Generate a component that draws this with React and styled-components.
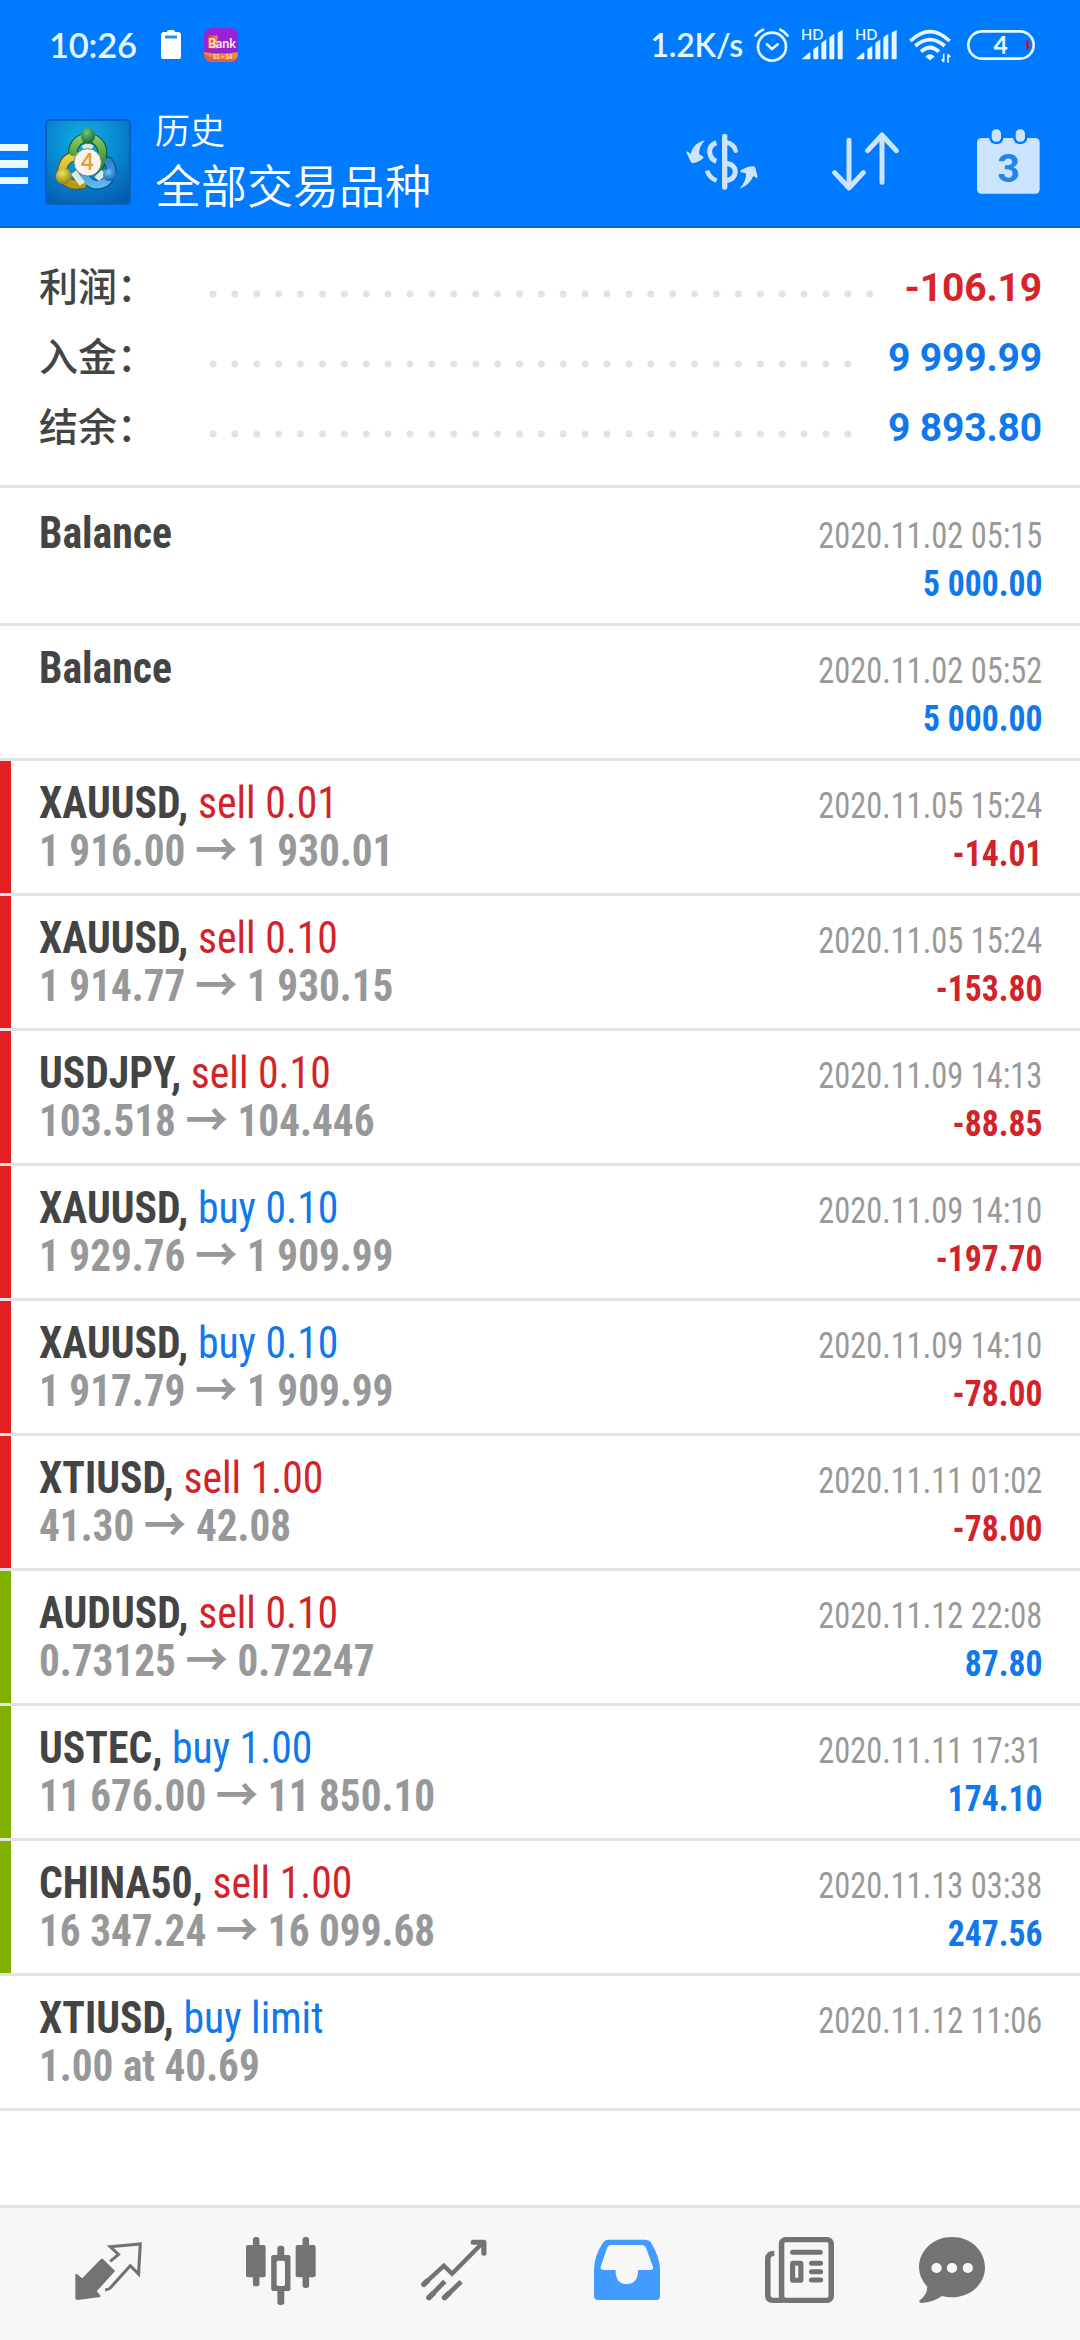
import React from 'react'
import styled, { createGlobalStyle } from 'styled-components'

const GlobalStyle = createGlobalStyle`
  *{
    box-sizing:border-box;
  }
  body{
    margin:0;
    background-color:#fff;
    font-family:Roboto, "Noto Sans CJK SC", sans-serif;
  }
  svg{
    display:block;
    flex-shrink:0;
  }
`
const Pantalla = styled.div`
  display:flex;
  flex-direction:column;
  width:1080px;
  height:2340px;
  background-color:#fff;
  overflow:hidden;
`
const Header = styled.header`
  height:228px;
  background-color:#007aff;
  border-bottom:2px solid #0a66d2;
  color:#fff;
`
const StatusBar = styled.div`
  display:flex;
  align-items:center;
  height:90px;
  padding:0 45px 0 49px;
  color:#e6f6ff;
  font-family:Lato, sans-serif;
`
const Clock = styled.span`
  width:112px;
  font-size:34.5px;
  font-weight:600;
  line-height:40px;
  letter-spacing:-0.2px;
`
const Speed = styled.span`
  margin-left:auto;
  margin-right:11px;
  font-size:32px;
  font-weight:600;
  line-height:40px;
  letter-spacing:-0.2px;
`
const Signals = styled.div`
  display:flex;
  align-items:center;
  gap:12px;
  margin-right:15px;
  svg{
    overflow:visible;
  }
`
const Notices = styled.div`
  display:flex;
  align-items:center;
  gap:23px;
`
const Toolbar = styled.div`
  display:flex;
  align-items:center;
  height:136px;
  padding:7px 40px 0 0;
`
const MenuBars = styled.div`
  display:flex;
  flex-direction:column;
  gap:9px;
  width:28px;
  margin:5px 17px 0 0;
  span{
    height:7.5px;
    background-color:#e9f7ff;
  }
`
const Titles = styled.div`
  display:flex;
  flex-direction:column;
  margin:-7px auto 0 24px;
  font-family:"Noto Sans CJK SC", sans-serif;
  font-weight:350;
  small{
    font-size:35px;
    line-height:50px;
  }
  strong{
    font-size:46px;
    font-weight:350;
    line-height:58px;
  }
`
const Actions = styled.div`
  display:flex;
  align-items:center;
  gap:74px;
  color:#cce4ff;
  svg:last-child{
    margin-left:4px;
  }
`
const Summary = styled.section`
  height:257px;
  padding:24px 38px 0 39px;
`
const SummaryRow = styled.div`
  display:flex;
  align-items:center;
  height:70px;
  color:#444;
`
const SummaryLabel = styled.span`
  width:163px;
  margin-top:-6px;
  font-family:"Noto Sans CJK SC", sans-serif;
  font-size:39px;
  font-weight:500;
  line-height:60px;
`
const Dots = styled.span`
  flex:1;
  height:8px;
  margin:13px 25px 0 0;
  background-image:radial-gradient(circle at 11px 4px, #e2e2e2 3px, transparent 4px);
  background-size:21.9px 8px;
  background-repeat:repeat-x;
`
const SummaryValue = styled.span`
  padding-top:1px;
  font-size:39px;
  font-weight:700;
  line-height:60px;
  letter-spacing:-0.15px;
  color:${p => p.$loss ? '#d8232a' : '#0f78ec'};
`
const List = styled.div`
  flex:1;
  border-top:3px solid #e3e3e3;
  padding-top:3px;
`
const Row = styled.div`
  display:flex;
  justify-content:space-between;
  height:135px;
  padding:18px 38px 0 28px;
  border-bottom:3px solid #e3e3e3;
  background:linear-gradient(${p => p.$bar || '#fff'}, ${p => p.$bar || '#fff'}) 0 0 / 11px 100% no-repeat;
  font-stretch:75%;
`
const Left = styled.div`
  padding-left:11px;
  font-size:44.5px;
  line-height:48px;
  white-space:pre;
`
const Right = styled.div`
  padding-top:3px;
  font-size:36.5px;
  line-height:48px;
  text-align:right;
`
const Symbol = styled.div`
  color:#444;
  font-weight:700;
  transform:scaleX(0.937);
  transform-origin:left;
`
const Side = styled.span`
  font-weight:400;
  color:${p => p.$sell ? '#d3232a' : '#0f78ec'};
`
const Prices = styled.div`
  color:#97989a;
  font-weight:700;
  transform:scaleX(0.926);
  transform-origin:left;
`
const Arrow = styled.span`
  font-family:"Noto Sans CJK SC", sans-serif;
  font-size:46px;
  font-weight:700;
  line-height:0;
`
const Time = styled.div`
  color:#999;
  transform:scaleX(0.888);
  transform-origin:right;
`
const Profit = styled.div`
  font-weight:700;
  color:${p => p.$loss ? '#d3232a' : '#0f78ec'};
  transform:scaleX(0.92);
  transform-origin:right;
`
const Nav = styled.nav`
  display:flex;
  height:135px;
  padding:0 21px 6px 22px;
  border-top:3px solid #e3e3e3;
  background-color:#f7f7f7;
`
const NavItem = styled.div`
  display:flex;
  align-items:center;
  justify-content:center;
  width:172.8px;
  padding-right:${p => p.$shift || 0}px;
  color:${p => p.$active ? '#429cff' : '#737373'};
`

const resumen = [
  { label: '利润：', value: '-106.19', loss: true },
  { label: '入金：', value: '9 999.99' },
  { label: '结余：', value: '9 893.80' },
]

const operaciones = [
  { symbol: 'Balance', time: '2020.11.02 05:15', profit: '5 000.00' },
  { symbol: 'Balance', time: '2020.11.02 05:52', profit: '5 000.00' },
  { symbol: 'XAUUSD', side: 'sell 0.01', from: '1 916.00', to: '1 930.01', time: '2020.11.05 15:24', profit: '-14.01' },
  { symbol: 'XAUUSD', side: 'sell 0.10', from: '1 914.77', to: '1 930.15', time: '2020.11.05 15:24', profit: '-153.80' },
  { symbol: 'USDJPY', side: 'sell 0.10', from: '103.518', to: '104.446', time: '2020.11.09 14:13', profit: '-88.85' },
  { symbol: 'XAUUSD', side: 'buy 0.10', from: '1 929.76', to: '1 909.99', time: '2020.11.09 14:10', profit: '-197.70' },
  { symbol: 'XAUUSD', side: 'buy 0.10', from: '1 917.79', to: '1 909.99', time: '2020.11.09 14:10', profit: '-78.00' },
  { symbol: 'XTIUSD', side: 'sell 1.00', from: '41.30', to: '42.08', time: '2020.11.11 01:02', profit: '-78.00' },
  { symbol: 'AUDUSD', side: 'sell 0.10', from: '0.73125', to: '0.72247', time: '2020.11.12 22:08', profit: '87.80' },
  { symbol: 'USTEC', side: 'buy 1.00', from: '11 676.00', to: '11 850.10', time: '2020.11.11 17:31', profit: '174.10' },
  { symbol: 'CHINA50', side: 'sell 1.00', from: '16 347.24', to: '16 099.68', time: '2020.11.13 03:38', profit: '247.56' },
  { symbol: 'XTIUSD', side: 'buy limit', note: '1.00 at 40.69', time: '2020.11.12 11:06' },
]

const BatteryIcon = () => (
  <svg width="20" height="30" viewBox="0 0 20 30">
    <path d="M6 2q0-2 2-2h4q2 0 2 2h3q3 0 3 3v22q0 2-2 2H2q-2 0-2-2V5q0-3 3-3z" fill="#fff" />
    <rect x="4" y="5.500" width="12" height="3" fill="#2d8cf5" />
  </svg>
)

const BankIcon = () => (
  <svg width="34" height="34" viewBox="0 0 34 34">
    <defs>
      <clipPath id="bank"><rect width="34" height="34" rx="8" /></clipPath>
      <linearGradient id="bankB" x1="0" x2="1"><stop offset="0" stopColor="#f0271c" /><stop offset="1" stopColor="#f58a5c" /></linearGradient>
    </defs>
    <g clipPath="url(#bank)">
      <rect width="34" height="34" fill="#9a22d6" />
      <path d="M0 24q17 3 34 0v10H0z" fill="#f08a35" />
      <path d="M0 25q8 8 34 6v3H0z" fill="#e55b4a" />
    </g>
    <rect x="3.500" y="7.500" width="10" height="13" fill="url(#bankB)" />
    <text x="4" y="19.500" fontSize="13" fontWeight="700" fill="#ffe9e0" fontFamily="Lato, sans-serif" textLength="28" lengthAdjust="spacingAndGlyphs">Bank</text>
    <text x="9" y="31" fontSize="6" fill="#fff" fontFamily="Noto Sans CJK SC, sans-serif">11·14</text>
  </svg>
)

const AlarmIcon = () => (
  <svg width="35" height="35" viewBox="0 0 105 105" fill="none" stroke="currentColor" strokeWidth="8" strokeLinecap="round">
    <circle cx="54" cy="56" r="42" />
    <path d="M39 49l15 14 17-14" />
    <path d="M5 22Q14 10 27 5M79 5q14 6 22 18" />
  </svg>
)

const SignalIcon = () => (
  <svg width="42" height="35" viewBox="0 0 126 105" fill="currentColor">
    <text x="0" y="36" fontSize="46" fontWeight="600" fontFamily="Lato, sans-serif" textLength="67" lengthAdjust="spacingAndGlyphs">HD</text>
    <path d="M4 94q0-4 4-6l16-14q4-2 4 2v15q0 3-3 3z" />
    <path d="M37 64l15-11v38q0 3-3 3h-9q-3 0-3-3z" />
    <path d="M61 45l15-11v57q0 3-3 3h-9q-3 0-3-3z" />
    <path d="M85 28l15-11v74q0 3-3 3h-9q-3 0-3-3z" />
    <path d="M110 14l15-9v86q0 3-3 3h-9q-3 0-3-3z" />
  </svg>
)

const WifiIcon = () => (
  <svg width="43" height="35" viewBox="0 0 129 105" fill="none" stroke="currentColor" strokeWidth="11">
    <path d="M4 39Q63-17 122 39" />
    <path d="M19 54q44-38 88 0" />
    <path d="M36 71q27-25 54 0" />
    <path d="M49 86q14-14 28 0L63 97z" fill="currentColor" stroke="none" />
    <path d="M104 77v25M98 94l6 8M117 104V79M117 79l7 9" strokeWidth="5" />
  </svg>
)

const ChargeIcon = () => (
  <svg width="68" height="30" viewBox="0 0 204 90">
    <rect x="4" y="4" width="196" height="82" rx="41" fill="none" stroke="currentColor" strokeWidth="8" />
    <path d="M178 29q8 0 8 16t-8 16z" fill="#b8104a" />
    <text x="101" y="71" fontSize="74" fontWeight="700" textAnchor="middle" fill="currentColor" fontFamily="Lato, sans-serif">4</text>
  </svg>
)

const AppLogo = () => (
  <svg width="86" height="86" viewBox="0 0 258 258">
    <defs>
      <radialGradient id="fondo" cx=".45" cy=".25" r=".85">
        <stop offset="0" stopColor="#10b2e4" />
        <stop offset=".5" stopColor="#0887cf" />
        <stop offset="1" stopColor="#055aae" />
      </radialGradient>
      <linearGradient id="verde" x2="0" y2="1"><stop offset="0" stopColor="#8cc860" /><stop offset="1" stopColor="#1f8230" /></linearGradient>
      <linearGradient id="oro" x2="0" y2="1"><stop offset="0" stopColor="#e8d648" /><stop offset="1" stopColor="#b39a18" /></linearGradient>
      <linearGradient id="azul" x2="0" y2="1"><stop offset="0" stopColor="#2f86cc" /><stop offset="1" stopColor="#5ab8f0" /></linearGradient>
      <radialGradient id="bolaV" cx=".4" cy=".3" r=".7"><stop offset="0" stopColor="#6fc878" /><stop offset="1" stopColor="#176c36" /></radialGradient>
      <radialGradient id="bolaO" cx=".4" cy=".3" r=".7"><stop offset="0" stopColor="#f2e45a" /><stop offset="1" stopColor="#948010" /></radialGradient>
      <radialGradient id="bolaA" cx=".4" cy=".3" r=".7"><stop offset="0" stopColor="#6cc6f5" /><stop offset="1" stopColor="#1562b4" /></radialGradient>
    </defs>
    <rect x="3" y="3" width="252" height="252" rx="10" fill="url(#fondo)" stroke="#0a5fc0" strokeWidth="6" />
    <g fill="none" strokeLinecap="round">
      <path d="M84 100a44 44 0 0 1 88 0q0 30-14 48" stroke="#0e5b3a" strokeWidth="30" />
      <path d="M96 112Q56 112 50 160q12 46 62 36" stroke="#5d5a1c" strokeWidth="30" />
      <path d="M118 168q22 44 62 22 32-24 10-62" stroke="#0b4d8e" strokeWidth="30" />
      <path d="M118 168q22 44 62 22 32-24 10-62" stroke="url(#azul)" strokeWidth="23" />
      <path d="M96 112Q56 112 50 160q12 46 62 36" stroke="url(#oro)" strokeWidth="23" />
      <path d="M84 100a44 44 0 0 1 88 0q0 30-14 48" stroke="url(#verde)" strokeWidth="23" />
    </g>
    <path d="M110 80q19-12 36 0l-10 18h-18zM78 166l16-12 26 36-16 10zM170 152l14 16-22 18-14-12z" fill="#dfe9dd" />
    <ellipse cx="129" cy="50" rx="21" ry="24" fill="url(#bolaV)" />
    <ellipse cx="56" cy="172" rx="24" ry="24" fill="url(#bolaO)" />
    <ellipse cx="194" cy="167" rx="20" ry="19" fill="url(#bolaA)" />
    <circle cx="128" cy="130" r="41" fill="#f7f4f0" stroke="#6f8a6a" strokeWidth="3" />
    <text x="127" y="154" fontSize="66" fontWeight="700" textAnchor="middle" fill="#f0973a" fontFamily="Lato, sans-serif">4</text>
  </svg>
)

const CurrencyIcon = () => (
  <svg width="72" height="60" viewBox="198 392 216 180" fill="none" stroke="currentColor" strokeLinecap="round">
    <path d="M314 405v152" strokeWidth="16" />
    <path d="M318 423q24 4 29 25" strokeWidth="14" />
    <path d="M289 424q-21 8-20 28 2 22 20 28" strokeWidth="15" strokeLinecap="butt" />
    <path d="M318 486q28 4 28 26-2 22-28 26" strokeWidth="15" />
    <path d="M261 508q7 22 29 30" strokeWidth="14" strokeLinecap="butt" />
    <path d="M255 417q-17 17-18 41l14 9q-5 12-31 19-7 0-9-7l-13-28q2-3 14 6 8-32 43-40zM358 562q22-22 20-46l-16-3q-4-6 9-11 15-8 29-7 5 0 7 7l6 26q-4 3-13-4-11 28-42 38z" fill="currentColor" stroke="none" />
  </svg>
)

const SortIcon = () => (
  <svg width="67" height="60" viewBox="635 396 201 180" fill="none" stroke="currentColor" strokeWidth="15" strokeLinecap="round" strokeLinejoin="round">
    <path d="M686 421v142M643 518l43 46 43-46" />
    <path d="M785 547V405M742 452l43-47 43 47" />
  </svg>
)

const CalendarIcon = () => (
  <svg width="63" height="65" viewBox="1070 386 189 195" fill="currentColor">
    <rect x="1070" y="413" width="188" height="167" rx="13" />
    <rect x="1107" y="380" width="42" height="51" rx="18" fill="#007aff" />
    <rect x="1179" y="380" width="42" height="51" rx="18" fill="#007aff" />
    <rect x="1114" y="387" width="28" height="37" rx="13" />
    <rect x="1186" y="387" width="28" height="37" rx="13" />
    <text x="1165" y="545" fontSize="118" fontWeight="700" textAnchor="middle" fill="#1f86ee" fontFamily="Roboto, sans-serif">3</text>
  </svg>
)

const TradeIcon = () => (
  <svg width="67" height="68" viewBox="218 174 194 204" preserveAspectRatio="none">
    <path d="M219 286l3-2 17 14 54-58q4-2 7 1l34 35-53 61 11 13-1 4-66 9q-6 0-6-6z" fill="currentColor" />
    <path d="M320 247l24-21-24-23 87-8-5 90-24-25-58 67q-6 6-15 5" fill="none" stroke="currentColor" strokeWidth="9" />
  </svg>
)

const ChartIcon = () => (
  <svg width="70" height="68" viewBox="715 174 203 204" preserveAspectRatio="none" fill="currentColor">
    <rect x="735" y="174" width="19" height="148" rx="8" />
    <rect x="715" y="198" width="57" height="97" rx="6" />
    <rect x="879" y="174" width="19" height="153" rx="8" />
    <rect x="859" y="198" width="58" height="97" rx="6" />
    <rect x="806" y="200" width="20" height="178" rx="8" />
    <rect x="788" y="228" width="56" height="108" rx="6" />
    <rect x="804" y="245" width="24" height="76" rx="5" fill="#f7f7f7" />
  </svg>
)

const TrendIcon = () => (
  <svg width="66" height="68" viewBox="1223 174 191 204" preserveAspectRatio="none" fill="none" stroke="currentColor" strokeWidth="13">
    <path d="M1231 316l58-56 24 24 90-94" />
    <path d="M1231 316l10-10M1246 356l12-12M1291 356l12-12" strokeWidth="16" strokeLinecap="round" />
    <path d="M1245 357l47-50M1290 357l49-49" strokeWidth="14" />
    <path d="M1374 190h31v33" strokeWidth="15" strokeLinecap="round" strokeLinejoin="round" />
  </svg>
)

const InboxIcon = () => (
  <svg width="66" height="68" viewBox="158 174 193 204" preserveAspectRatio="none" fill="currentColor" fillRule="evenodd">
    <path d="M198 182h112q9 0 14 8 27 44 27 82v80q0 11-11 11H170q-12 0-12-11v-80q0-40 27-82 5-8 13-8zM208 198q-8 0-11 7l-20 60q0 8 9 8h35q0 42 32 42 34 0 34-42h36q8 0 8-8l-20-56q-3-9-11-11z" />
  </svg>
)

const NewsIcon = () => (
  <svg width="69" height="68" viewBox="658 174 200 204" preserveAspectRatio="none" fill="none" stroke="currentColor" strokeWidth="16">
    <rect x="706" y="182" width="144" height="182" rx="12" />
    <path d="M685 223q-19 0-19 18v108q0 15 15 15h30" />
    <path d="M738 220h80M793 253h26M793 278h26M793 303h26" strokeWidth="15" strokeLinecap="round" />
    <rect x="738" y="253" width="24" height="51" rx="2" strokeWidth="15" />
  </svg>
)

const ChatIcon = () => (
  <svg width="66" height="68" viewBox="1103 174 192 204" preserveAspectRatio="none">
    <path d="M1199 174c53 0 96 40 96 91s-43 90-96 90q-16 0-29-4-26 19-60 21-11-2-4-9 21-16 21-40-24-26-24-58c0-51 43-91 96-91z" fill="currentColor" />
    <circle cx="1154" cy="267" r="15" fill="#f7f7f7" />
    <circle cx="1199" cy="267" r="15" fill="#f7f7f7" />
    <circle cx="1245" cy="267" r="15" fill="#f7f7f7" />
  </svg>
)

const Operacion = ({ item }) => {
  const { symbol, side, from, to, note, time, profit } = item
  const loss = !!profit && profit.startsWith('-')
  const bar = side && profit ? (loss ? '#e21f22' : '#7fb200') : null
  return (
    <Row $bar={bar}>
      <Left>
        <Symbol>{symbol}{side && ', '}{side && <Side $sell={side.startsWith('sell')}>{side}</Side>}</Symbol>
        {from && <Prices>{from} <Arrow>→</Arrow> {to}</Prices>}
        {note && <Prices>{note}</Prices>}
      </Left>
      <Right>
        <Time>{time}</Time>
        {profit && <Profit $loss={loss}>{profit}</Profit>}
      </Right>
    </Row>
  )
}

const App = () => {
  return (
    <>
      <GlobalStyle />
      <Pantalla>
        <Header>
          <StatusBar>
            <Clock>10:26</Clock>
            <Notices>
              <BatteryIcon />
              <BankIcon />
            </Notices>
            <Speed>1.2K/s</Speed>
            <Signals>
              <AlarmIcon />
              <SignalIcon />
              <SignalIcon />
              <WifiIcon />
            </Signals>
            <ChargeIcon />
          </StatusBar>
          <Toolbar>
            <MenuBars><span /><span /><span /></MenuBars>
            <AppLogo />
            <Titles>
              <small>历史</small>
              <strong>全部交易品种</strong>
            </Titles>
            <Actions>
              <CurrencyIcon />
              <SortIcon />
              <CalendarIcon />
            </Actions>
          </Toolbar>
        </Header>
        <Summary>
          {resumen.map(r => (
            <SummaryRow key={r.label}>
              <SummaryLabel>{r.label}</SummaryLabel>
              <Dots />
              <SummaryValue $loss={r.loss}>{r.value}</SummaryValue>
            </SummaryRow>
          ))}
        </Summary>
        <List>
          {operaciones.map((item, i) => <Operacion key={i} item={item} />)}
        </List>
        <Nav>
          <NavItem><TradeIcon /></NavItem>
          <NavItem><ChartIcon /></NavItem>
          <NavItem><TrendIcon /></NavItem>
          <NavItem $active><InboxIcon /></NavItem>
          <NavItem><NewsIcon /></NavItem>
          <NavItem $shift={40}><ChatIcon /></NavItem>
        </Nav>
      </Pantalla>
    </>
  )
}

export default App
